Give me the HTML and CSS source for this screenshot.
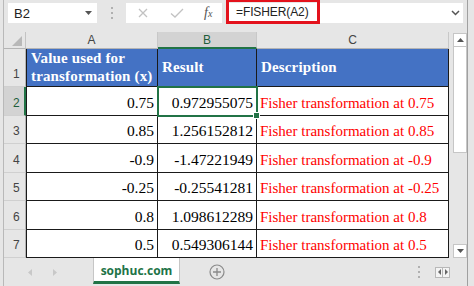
FILE: index.html
```html
<!DOCTYPE html>
<html lang="en">
<head>
    <meta charset="UTF-8">
    <meta name="viewport" content="width=device-width, initial-scale=1.0">
    <title>FISHER function</title>
    <link rel="stylesheet" href="styles.css">
</head>
<body>
<div class="app">
    <div class="window">
        <div class="formula-bar">
            <div class="name-box">
                <span>B2</span>
                <svg width="7" height="4" viewBox="0 0 7 4"><path d="M0 0H7L3.5 4Z" fill="#555"/></svg>
            </div>
            <div class="grip">
                <svg width="2" height="12" viewBox="0 0 2 12"><rect x="0" y="0" width="2" height="2" fill="#b0b0b0"/><rect x="0" y="5" width="2" height="2" fill="#b0b0b0"/><rect x="0" y="10" width="2" height="2" fill="#b0b0b0"/></svg>
            </div>
            <div class="fx-buttons">
                <svg width="10" height="10" viewBox="0 0 10 10"><path d="M1 1L9 9M9 1L1 9" stroke="#c2c2c2" stroke-width="1.3" fill="none"/></svg>
                <svg width="14" height="10" viewBox="0 0 14 10"><path d="M1 5.5L5 9L13 1" stroke="#c2c2c2" stroke-width="1.3" fill="none"/></svg>
                <span class="fx">f<small>x</small></span>
            </div>
            <div class="formula">
                <span class="formula-text">=FISHER(A2)</span>
                <svg width="9" height="6" viewBox="0 0 9 6"><path d="M1 1L4.5 4.5L8 1" stroke="#555" stroke-width="1.5" fill="none"/></svg>
            </div>
        </div>

        <div class="main">
            <div class="sheet">
                <div class="hdr corner">
                    <svg width="10" height="10" viewBox="0 0 10 10"><path d="M10 0V10H0Z" fill="#b8b8b8"/></svg>
                </div>
                <div class="hdr col">A</div>
                <div class="hdr col active-col">B</div>
                <div class="hdr col">C</div>

                <div class="hdr row">1</div>
                <div class="cell head first">Value used for<br>transformation (x)</div>
                <div class="cell head">Result</div>
                <div class="cell head">Description</div>

                <div class="hdr row active-row">2</div>
                <div class="cell num first">0.75</div>
                <div class="cell num selected">0.972955075</div>
                <div class="cell desc">Fisher transformation at 0.75</div>

                <div class="hdr row">3</div>
                <div class="cell num first">0.85</div>
                <div class="cell num">1.256152812</div>
                <div class="cell desc">Fisher transformation at 0.85</div>

                <div class="hdr row">4</div>
                <div class="cell num first">-0.9</div>
                <div class="cell num">-1.47221949</div>
                <div class="cell desc">Fisher transformation at -0.9</div>

                <div class="hdr row">5</div>
                <div class="cell num first">-0.25</div>
                <div class="cell num">-0.25541281</div>
                <div class="cell desc">Fisher transformation at -0.25</div>

                <div class="hdr row">6</div>
                <div class="cell num first">0.8</div>
                <div class="cell num">1.098612289</div>
                <div class="cell desc">Fisher transformation at 0.8</div>

                <div class="hdr row">7</div>
                <div class="cell num first">0.5</div>
                <div class="cell num">0.549306144</div>
                <div class="cell desc">Fisher transformation at 0.5</div>
            </div>

            <div class="vscroll">
                <div class="arrow-box">
                    <svg width="7" height="4" viewBox="0 0 7 4"><path d="M0 4H7L3.5 0Z" fill="#555"/></svg>
                </div>
                <div class="thumb"></div>
                <div class="track"></div>
                <div class="arrow-box">
                    <svg width="7" height="4" viewBox="0 0 7 4"><path d="M0 0H7L3.5 4Z" fill="#555"/></svg>
                </div>
            </div>
        </div>

        <div class="tabs">
            <svg class="nav-left" width="4" height="7" viewBox="0 0 4 7"><path d="M4 0V7L0 3.5Z" fill="#c8c8c8"/></svg>
            <svg class="nav-right" width="4" height="7" viewBox="0 0 4 7"><path d="M0 0V7L4 3.5Z" fill="#c8c8c8"/></svg>
            <div class="tab">sophuc.com</div>
            <svg class="add-sheet" width="16" height="16" viewBox="0 0 16 16"><circle cx="8" cy="8" r="7" fill="none" stroke="#8a8a8a" stroke-width="1.2"/><path d="M8 4V12M4 8H12" stroke="#8a8a8a" stroke-width="1.3"/></svg>
            <svg class="tab-grip" width="2" height="12" viewBox="0 0 2 12"><rect x="0" y="0" width="2" height="2" fill="#b0b0b0"/><rect x="0" y="5" width="2" height="2" fill="#b0b0b0"/><rect x="0" y="10" width="2" height="2" fill="#b0b0b0"/></svg>
            <div class="hscroll">
                <div class="mini-btn"><svg width="3" height="6" viewBox="0 0 3 6"><path d="M3 0V6L0 3Z" fill="#666"/></svg></div>
                <div class="mini-btn"><svg width="3" height="6" viewBox="0 0 3 6"><path d="M0 0V6L3 3Z" fill="#666"/></svg></div>
            </div>
        </div>
    </div>
</div>
</body>
</html>
```

FILE: styles.css
```css
* {
    box-sizing: border-box;
}
body {
    margin: 0;
    width: 474px;
    height: 286px;
    overflow: hidden;
    background: #e6e6e6;
    font-family: "Liberation Sans", Arial, sans-serif;
}
.app {
    height: 286px;
    padding: 0 6px 0 3px;
}
.window {
    height: 100%;
    border-left: 1px solid #b9b9b9;
    border-right: 1px solid #a0a0a0;
    display: flex;
    flex-direction: column;
}

/* formula bar */
.formula-bar {
    height: 32px;
    padding: 3px 2px 0 4px;
    display: flex;
    align-items: flex-start;
}
.name-box {
    width: 89px;
    height: 20px;
    background: #fff;
    display: flex;
    align-items: center;
    justify-content: space-between;
    padding: 0 5px 0 6px;
    font-size: 13px;
    color: #222;
}
.grip {
    width: 29px;
    height: 20px;
    display: flex;
    align-items: center;
    justify-content: center;
}
.fx-buttons {
    width: 96px;
    height: 20px;
    background: #fff;
    display: flex;
    align-items: center;
    padding-left: 12px;
}
.fx-buttons svg:first-child {
    margin-right: 22px;
}
.fx {
    margin-left: 20px;
    font-family: "Liberation Serif", serif;
    font-style: italic;
    font-size: 14px;
    color: #555;
}
.fx small {
    font-size: 10px;
}
.formula {
    flex: 1;
    height: 20px;
    margin-left: 4px;
    margin-right: 2px;
    background: #fff;
    display: flex;
    align-items: center;
    justify-content: space-between;
    padding-right: 3px;
}
.formula-text {
    width: 94px;
    height: 25px;
    margin-top: -3px;
    padding: 0 0 0 7px;
    border: 3px solid #e3121c;
    font-size: 12px;
    letter-spacing: -0.1px;
    color: #222;
    display: flex;
    align-items: center;
}

/* sheet */
.main {
    height: 226px;
    display: flex;
}
.sheet {
    width: 445px;
    display: grid;
    grid-template-columns: 22px 132px 99px 192px;
    grid-template-rows: 17px 38px 29px 28px 29px 28px 29px 28px;
    background: #fff;
}
.hdr {
    background: #e6e6e6;
    color: #444;
    font-size: 12px;
    display: flex;
}
.corner {
    border-right: 1px solid #c3c3c3;
    border-bottom: 1px solid #b4b4b4;
    align-items: flex-end;
    justify-content: flex-end;
    padding: 0 3px 2px 0;
}
.col {
    border-right: 1px solid #c8c8c8;
    border-bottom: 1px solid #b4b4b4;
    align-items: center;
    justify-content: center;
}
.active-col {
    background: #d3d3d3;
    border-bottom: 2px solid #217346;
    color: #1e5e3b;
}
.row {
    border-right: 1px solid #b4b4b4;
    border-bottom: 1px solid #d0d0d0;
    align-items: flex-end;
    padding: 0 0 5px 9px;
}
.active-row {
    background: #d3d3d3;
    border-right: 2px solid #217346;
    color: #1e5e3b;
}
.cell {
    border-right: 1px solid #1a1a1a;
    border-bottom: 1px solid #1a1a1a;
    font-family: "Liberation Serif", "Times New Roman", serif;
    font-size: 15px;
    display: flex;
    align-items: flex-end;
    white-space: nowrap;
}
.first {
    border-left: 1px solid #1a1a1a;
}
.head {
    background: #4472c4;
    color: #fff;
    font-weight: bold;
    letter-spacing: 0.15px;
    line-height: 18px;
    align-items: center;
    padding: 0 3px 1px 4px;
}
.num {
    justify-content: flex-end;
    padding: 0 3px 3px 0;
    color: #000;
    font-size: 15.5px;
}
.desc {
    color: #f00;
    padding: 0 0 3px 3px;
}
.selected {
    position: relative;
    z-index: 1;
    outline: 2px solid #217346;
    outline-offset: -1px;
}
.selected::after {
    content: "";
    position: absolute;
    right: -4px;
    bottom: -4px;
    width: 5px;
    height: 5px;
    background: #217346;
    border: 1px solid #fff;
}

/* vertical scrollbar */
.vscroll {
    width: 14px;
    margin-left: 4px;
    padding-top: 1px;
    display: flex;
    flex-direction: column;
}
.arrow-box {
    height: 14px;
    background: #fff;
    border: 1px solid #c6c6c6;
    display: flex;
    align-items: center;
    justify-content: center;
}
.thumb {
    height: 106px;
    background: #fff;
    border: 1px solid #c6c6c6;
    border-top: none;
}
.track {
    flex: 1;
}

/* sheet tabs */
.tabs {
    height: 28px;
    display: flex;
    align-items: center;
}
.nav-left {
    margin-left: 24px;
}
.nav-right {
    margin-left: 21px;
}
.tab {
    align-self: flex-start;
    margin-left: 36px;
    width: 87px;
    height: 26px;
    background: #fff;
    border-left: 1px solid #c6c6c6;
    border-right: 1px solid #c6c6c6;
    border-bottom: 3px solid #217346;
    color: #217346;
    font-family: "Open Sans", sans-serif;
    font-weight: bold;
    font-size: 12px;
    display: flex;
    align-items: center;
    justify-content: center;
    padding-top: 1px;
}
.add-sheet {
    margin-left: 29px;
}
.tab-grip {
    margin-left: 193px;
}
.hscroll {
    margin-left: 15px;
    display: flex;
}
.mini-btn {
    width: 8px;
    height: 11px;
    background: #f4f4f4;
    border: 1px solid #b8b8b8;
    display: flex;
    align-items: center;
    justify-content: center;
}
.mini-btn + .mini-btn {
    margin-left: -1px;
}
```
